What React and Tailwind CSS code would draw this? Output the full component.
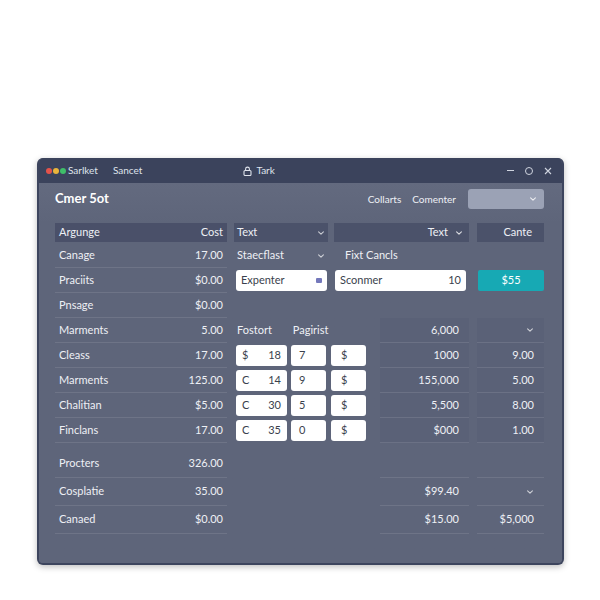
import React from 'react';

const font = { fontFamily: 'Lato, "Open Sans", sans-serif' };

const leftRows = [
  ['Canage', '17.00'],
  ['Praciits', '$0.00'],
  ['Pnsage', '$0.00'],
  ['Marments', '5.00'],
  ['Cleass', '17.00'],
  ['Marments', '125.00'],
  ['Chalitian', '$5.00'],
  ['Finclans', '17.00'],
];

const smallRows = [
  ['$', '18', '7', '1000', '9.00'],
  ['C', '14', '9', '155,000', '5.00'],
  ['C', '30', '5', '5,500', '8.00'],
  ['C', '35', '0', '$000', '1.00'],
];

const Chevron = ({ className = '' }) => (
  <svg width="8" height="8" viewBox="0 0 10 10" className={className}>
    <path d="M2 3.5 L5 6.5 L8 3.5" fill="none" stroke="currentColor" strokeWidth="1.4" strokeLinecap="round" strokeLinejoin="round" />
  </svg>
);

const LeftCell = ({ label, value, tall }) => (
  <div className={`w-[172px] shrink-0 flex items-center justify-between px-[4px] border-b border-white/10 ${tall ? 'h-[28px]' : 'h-[25px]'}`}>
    <span>{label}</span>
    <span>{value}</span>
  </div>
);

const ValueCells = ({ a, b, chevron, tall }) => (
  <div className="flex ml-[14px] gap-[8px]">
    <div className={`w-[89px] flex items-center justify-end pr-[10px] bg-[#5a6177] border-b border-white/10 ${tall ? 'h-[28px]' : 'h-[25px]'}`}>{a}</div>
    <div className={`w-[67px] flex items-center justify-end pr-[10px] bg-[#5a6177] border-b border-white/10 ${tall ? 'h-[28px]' : 'h-[25px]'}`}>
      {chevron ? <Chevron className="text-white/70" /> : b}
    </div>
  </div>
);

export default function App() {
  return (
    <div className="w-[600px] h-[600px] bg-white overflow-hidden" style={font}>
      <div className="ml-[37px] mt-[158px] w-[527px] h-[407px] rounded-[6px] bg-[#5e657a] border-2 border-t-0 border-[#3d455e] shadow-[0_2px_6px_rgba(0,0,0,0.25)] overflow-hidden flex flex-col text-[11px] text-[#eef0f5]">
        {/* title bar */}
        <div className="h-[25px] bg-[#3b435c] flex items-center pl-[7px] pr-[10px] text-[10px] text-[#dfe3ec]">
          <div className="flex gap-[1px]">
            <span className="w-[6px] h-[6px] rounded-full bg-[#e5534b]" />
            <span className="w-[6px] h-[6px] rounded-full bg-[#eab53b]" />
            <span className="w-[6px] h-[6px] rounded-full bg-[#3fbf6a]" />
          </div>
          <span className="ml-[2px]">Sarlket</span>
          <span className="ml-[15px]">Sancet</span>
          <div className="ml-[101px] flex items-center gap-[4px]">
            <svg width="9" height="10" viewBox="0 0 9 10">
              <rect x="1" y="4.5" width="7" height="5" rx="1" fill="none" stroke="currentColor" strokeWidth="1.1" />
              <path d="M2.6 4.5 V3 a1.9 1.9 0 0 1 3.8 0 V4.5" fill="none" stroke="currentColor" strokeWidth="1.1" />
            </svg>
            <span>Tark</span>
          </div>
          <div className="ml-auto flex items-center gap-[11px] text-[#cfd4df]">
            <span className="w-[7px] h-[1px] bg-current" />
            <span className="w-[8px] h-[8px] rounded-full border border-current" />
            <svg width="8" height="8" viewBox="0 0 8 8">
              <path d="M1 1 L7 7 M7 1 L1 7" stroke="currentColor" strokeWidth="1.1" />
            </svg>
          </div>
        </div>

        {/* body */}
        <div className="flex-1 pl-[16px] pr-[18px] bg-gradient-to-b from-[#636a7f] to-[#5e657a] to-[40px]">
          <div className="mt-[6px] h-[20px] flex items-center">
            <span className="text-[13px] font-bold text-white">Cmer 5ot</span>
            <span className="ml-auto text-[10px]">Collarts</span>
            <span className="ml-[11px] text-[10px]">Comenter</span>
            <div className="ml-[12px] w-[76px] h-[20px] rounded-[3px] bg-[#9ba2b5] flex items-center justify-end pr-[7px]">
              <Chevron className="text-white/80" />
            </div>
          </div>

          {/* header row */}
          <div className="mt-[14px] flex">
            <div className="w-[172px] h-[19px] bg-[#4a5069] flex items-center justify-between px-[4px]">
              <span>Argunge</span>
              <span>Cost</span>
            </div>
            <div className="ml-[7px] flex gap-[6px]">
              <div className="w-[94px] h-[19px] bg-[#4b526a] flex items-center justify-between px-[3px]">
                <span>Text</span>
                <Chevron className="text-white/70" />
              </div>
              <div className="w-[135px] h-[19px] bg-[#4b526a] flex items-center justify-end gap-[7px] pr-[6px]">
                <span>Text</span>
                <Chevron className="text-white/80" />
              </div>
              <div className="ml-[2px] w-[67px] h-[19px] bg-[#4b526a] flex items-center justify-end pr-[12px]">Cante</div>
            </div>
          </div>

          {/* row 1 */}
          <div className="flex mt-[1px]">
            <LeftCell label={leftRows[0][0]} value={leftRows[0][1]} />
            <div className="ml-[7px] flex items-center">
              <div className="w-[94px] flex items-center justify-between px-[3px]">
                <span>Staecflast</span>
                <Chevron className="text-white/70" />
              </div>
              <span className="ml-[17px]">Fixt Cancls</span>
            </div>
          </div>

          {/* row 2 inputs */}
          <div className="flex">
            <LeftCell label={leftRows[1][0]} value={leftRows[1][1]} />
            <div className="ml-[9px] flex items-center">
              <div className="w-[91px] h-[21px] bg-white rounded-[3px] flex items-center justify-between px-[5px] text-[#3a3f4d]">
                <span>Expenter</span>
                <span className="w-[6px] h-[5px] rounded-[1px] bg-[#7478bb]" />
              </div>
              <div className="ml-[8px] w-[131px] h-[21px] bg-white rounded-[3px] flex items-center justify-between px-[5px] text-[#3a3f4d]">
                <span>Sconmer</span>
                <span>10</span>
              </div>
              <div className="ml-[12px] w-[66px] h-[21px] bg-[#17a9b4] rounded-[2px] flex items-center justify-center text-white">$55</div>
            </div>
          </div>

          {/* row 3 */}
          <div className="flex">
            <LeftCell label={leftRows[2][0]} value={leftRows[2][1]} />
          </div>

          {/* row 4 */}
          <div className="flex">
            <LeftCell label={leftRows[3][0]} value={leftRows[3][1]} />
            <div className="ml-[7px] flex items-center">
              <div className="w-[132px] flex items-center pl-[3px]">
                <span>Fostort</span>
                <span className="ml-[21px]">Pagirist</span>
              </div>
              <ValueCells a="6,000" chevron />
            </div>
          </div>

          {/* small input rows */}
          {smallRows.map((r, i) => (
            <div key={i} className="flex">
              <LeftCell label={leftRows[4 + i][0]} value={leftRows[4 + i][1]} />
              <div className="ml-[7px] flex items-center">
                <div className="w-[132px] flex items-center pl-[2px] text-[#3a3f4d]">
                  <div className="w-[51px] h-[21px] bg-white rounded-[3px] flex items-center justify-between px-[6px]">
                    <span>{r[0]}</span>
                    <span>{r[1]}</span>
                  </div>
                  <div className="ml-[4px] w-[35px] h-[21px] bg-white rounded-[3px] flex items-center px-[8px]">{r[2]}</div>
                  <div className="ml-[5px] w-[35px] h-[21px] bg-white rounded-[3px] flex items-center px-[10px]">$</div>
                </div>
                <ValueCells a={r[3]} b={r[4]} />
              </div>
            </div>
          ))}

          {/* bottom rows */}
          <div className="flex mt-[7px]">
            <LeftCell label="Procters" value="326.00" tall />
            <div className="ml-[7px] flex items-end">
              <div className="w-[132px]" />
              <div className="flex ml-[14px] gap-[8px]">
                <div className="w-[89px] border-b border-white/10" />
                <div className="w-[67px] border-b border-white/10" />
              </div>
            </div>
          </div>
          <div className="flex">
            <LeftCell label="Cosplatie" value="35.00" tall />
            <div className="ml-[7px] flex">
              <div className="w-[132px]" />
              <div className="flex ml-[14px] gap-[8px]">
                <div className="w-[89px] h-[28px] flex items-center justify-end pr-[10px] border-b border-white/10">$99.40</div>
                <div className="w-[67px] h-[28px] flex items-center justify-end pr-[10px] border-b border-white/10">
                  <Chevron className="text-white/70" />
                </div>
              </div>
            </div>
          </div>
          <div className="flex">
            <LeftCell label="Canaed" value="$0.00" tall />
            <div className="ml-[7px] flex">
              <div className="w-[132px]" />
              <div className="flex ml-[14px] gap-[8px]">
                <div className="w-[89px] h-[28px] flex items-center justify-end pr-[10px] border-b border-white/10">$15.00</div>
                <div className="w-[67px] h-[28px] flex items-center justify-end pr-[10px] border-b border-white/10">$5,000</div>
              </div>
            </div>
          </div>
        </div>
      </div>
    </div>
  );
}
